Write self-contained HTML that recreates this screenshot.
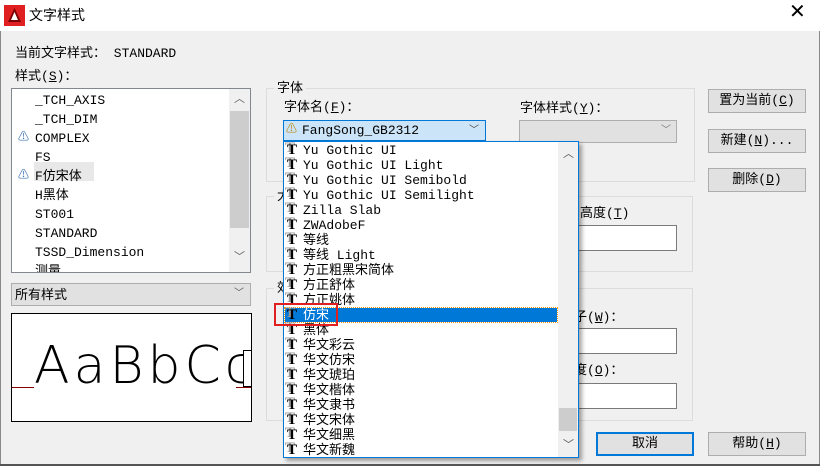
<!DOCTYPE html>
<html><head><meta charset="utf-8"><style>
*{margin:0;padding:0;box-sizing:border-box}
body{width:820px;height:466px;background:#f0f0f0;position:relative;overflow:hidden;font-family:"Liberation Mono","Noto Sans CJK SC",monospace;font-size:13px;color:#000}
.a{position:absolute;white-space:nowrap;line-height:15px}
.box{position:absolute;border:1px solid #a0a0a0;background:#fff}
.grp{position:absolute;border:1px solid #dcdcdc}
.btn{position:absolute;background:#e1e1e1;border:1px solid #adadad;text-align:center;line-height:21px}
.t{display:inline-block;width:16px;font-family:"Liberation Serif",serif;font-weight:bold;font-size:15px;position:relative;text-shadow:-2px -2px 0 #999}
</style></head><body>
<div style="position:absolute;left:0;top:0;width:820px;height:31px;background:#fff"></div>
<svg style="position:absolute;left:4px;top:5px" width="21" height="21"><rect width="21" height="21" fill="#e02020"/><path d="M10.5 3 L17 17 L4 17 Z" fill="#7a0000"/><path d="M10.5 7 L14 15 L7 15Z" fill="#fff"/></svg>
<div class="a" style="left:29px;top:8px;font-family:'Liberation Sans','Noto Sans CJK SC',sans-serif;font-size:14px">文字样式</div>
<div class="a" style="left:789px;top:5px;font-family:'Liberation Sans',sans-serif;font-size:20px;font-weight:300">✕</div>
<div style="position:absolute;left:0;top:31px;width:1px;height:435px;background:#888"></div>
<div style="position:absolute;right:0;top:31px;width:1px;height:435px;background:#888"></div>

<div class="a" style="left:15px;top:46px">当前文字样式：  STANDARD</div>
<div class="a" style="left:15px;top:69px">样式(<u>S</u>)：</div>
<div class="box" style="left:11px;top:88px;width:240px;height:185px;border-color:#828790;overflow:hidden">
<div style="position:absolute;left:217px;top:0;width:21px;height:183px;background:#f0f0f0"></div>
<div style="position:absolute;left:218px;top:22px;width:19px;height:117px;background:#cdcdcd"></div>
<div class="a" style="left:222px;top:4px;font-size:11px;color:#606060">︿</div>
<div class="a" style="left:222px;top:162px;font-size:11px;color:#606060">﹀</div>
<div style="position:absolute;left:22px;top:73px;width:60px;height:19px;background:#e8e8e8"></div>
<div class="a" style="left:23px;top:4px">_TCH_AXIS</div>
<div class="a" style="left:23px;top:23px">_TCH_DIM</div>
<div class="a" style="left:6px;top:42px;color:#3a6fb0;font-size:11px">⚠</div>
<div class="a" style="left:23px;top:42px">COMPLEX</div>
<div class="a" style="left:23px;top:61px">FS</div>
<div class="a" style="left:6px;top:80px;color:#3a6fb0;font-size:11px">⚠</div>
<div class="a" style="left:23px;top:80px">F仿宋体</div>
<div class="a" style="left:23px;top:99px">H黑体</div>
<div class="a" style="left:23px;top:118px">ST001</div>
<div class="a" style="left:23px;top:137px">STANDARD</div>
<div class="a" style="left:23px;top:156px">TSSD_Dimension</div>
<div class="a" style="left:23px;top:175px">测量</div>
</div>
<div style="position:absolute;left:11px;top:283px;width:240px;height:23px;background:#e1e1e1;border:1px solid #adadad"></div>
<div class="a" style="left:15px;top:287px;font-family:'Liberation Sans','Noto Sans CJK SC',sans-serif">所有样式</div>
<div class="a" style="left:234px;top:287px;font-size:10px;color:#555">﹀</div>
<div style="position:absolute;left:11px;top:313px;width:241px;height:109px;background:#fff;border:1px solid #000;overflow:hidden">
<div style="position:absolute;left:0;top:73px;width:22px;height:1px;background:#800"></div>
<div style="position:absolute;left:224px;top:73px;width:20px;height:1px;background:#800"></div>
<div class="a" style="left:22px;top:24px;font-family:'DejaVu Sans',sans-serif;font-size:52px;line-height:56px;font-weight:200;letter-spacing:4px">AaBbCc</div>
<div style="position:absolute;left:231px;top:36px;width:14px;height:37px;border:1px solid #000;background:#fff"></div>
</div>

<div class="grp" style="left:266px;top:88px;width:429px;height:94px"></div>
<div class="a" style="left:274px;top:81px;background:#f0f0f0;padding:0 3px">字体</div>
<div class="a" style="left:284px;top:100px">字体名(<u>F</u>)：</div>
<div style="position:absolute;left:283px;top:120px;width:203px;height:21px;background:#cce4f7;border:1px solid #0078d7"></div>
<div class="a" style="left:286px;top:123px;color:#b8860b;font-size:11px">⚠</div>
<div class="a" style="left:302px;top:123px">FangSong_GB2312</div>
<div class="a" style="left:469px;top:124px;font-size:10px;color:#444">﹀</div>
<div class="a" style="left:520px;top:101px">字体样式(<u>Y</u>)：</div>
<div style="position:absolute;left:519px;top:120px;width:158px;height:23px;background:#e1e1e1;border:1px solid #adadad"></div>
<div class="a" style="left:661px;top:124px;font-size:10px;color:#777">﹀</div>

<div class="grp" style="left:266px;top:196px;width:427px;height:76px"></div>
<div class="a" style="left:274px;top:189px;background:#f0f0f0;padding:0 3px">大</div>
<div class="a" style="left:580px;top:206px">高度(<u>T</u>)</div>
<div class="box" style="left:578px;top:225px;width:99px;height:26px;border-color:#7a7a7a"></div>
<div class="grp" style="left:266px;top:288px;width:427px;height:133px"></div>
<div class="a" style="left:274px;top:281px;background:#f0f0f0;padding:0 3px">效</div>
<div class="a" style="left:535px;top:310px">宽度因子(<u>W</u>)：</div>
<div class="box" style="left:578px;top:328px;width:99px;height:26px;border-color:#7a7a7a"></div>
<div class="a" style="left:535px;top:363px">倾斜角度(<u>O</u>)：</div>
<div class="box" style="left:578px;top:383px;width:99px;height:26px;border-color:#7a7a7a"></div>

<div class="btn" style="left:708px;top:89px;width:98px;height:24px">置为当前(<u>C</u>)</div>
<div class="btn" style="left:708px;top:129px;width:98px;height:24px">新建(<u>N</u>)...</div>
<div class="btn" style="left:708px;top:168px;width:98px;height:24px">删除(<u>D</u>)</div>
<div class="btn" style="left:596px;top:432px;width:98px;height:24px;border:2px solid #0078d7;line-height:19px">取消</div>
<div class="btn" style="left:708px;top:432px;width:98px;height:24px">帮助(<u>H</u>)</div>

<div style="position:absolute;left:283px;top:141px;width:296px;height:317px;background:#fff;border:1px solid #0078d7;box-shadow:3px 3px 4px rgba(0,0,0,.35);overflow:hidden">
<div style="position:absolute;left:274px;top:0;width:20px;height:315px;background:#f0f0f0"></div>
<div style="position:absolute;left:275px;top:266px;width:18px;height:23px;background:#cdcdcd"></div>
<div class="a" style="left:279px;top:6px;font-size:11px;color:#555">︿</div>
<div class="a" style="left:279px;top:297px;font-size:11px;color:#555">﹀</div>
<div style="position:absolute;left:1px;top:166px;width:272px;height:14px;background:#0078d7;outline:1px dotted #f90"></div>
<div style="position:absolute;left:0;top:1px">
<div class="a" style="left:3px;top:0"><span class="t">T</span>Yu Gothic UI</div>
<div class="a" style="left:3px;top:15px"><span class="t">T</span>Yu Gothic UI Light</div>
<div class="a" style="left:3px;top:30px"><span class="t">T</span>Yu Gothic UI Semibold</div>
<div class="a" style="left:3px;top:45px"><span class="t">T</span>Yu Gothic UI Semilight</div>
<div class="a" style="left:3px;top:60px"><span class="t">T</span>Zilla Slab</div>
<div class="a" style="left:3px;top:75px"><span class="t">T</span>ZWAdobeF</div>
<div class="a" style="left:3px;top:90px"><span class="t">T</span>等线</div>
<div class="a" style="left:3px;top:105px"><span class="t">T</span>等线 Light</div>
<div class="a" style="left:3px;top:120px"><span class="t">T</span>方正粗黑宋简体</div>
<div class="a" style="left:3px;top:135px"><span class="t">T</span>方正舒体</div>
<div class="a" style="left:3px;top:150px"><span class="t">T</span>方正姚体</div>
<div class="a" style="left:3px;top:165px;color:#fff"><span class="t" style="color:#000">T</span>仿宋</div>
<div class="a" style="left:3px;top:180px"><span class="t">T</span>黑体</div>
<div class="a" style="left:3px;top:195px"><span class="t">T</span>华文彩云</div>
<div class="a" style="left:3px;top:210px"><span class="t">T</span>华文仿宋</div>
<div class="a" style="left:3px;top:225px"><span class="t">T</span>华文琥珀</div>
<div class="a" style="left:3px;top:240px"><span class="t">T</span>华文楷体</div>
<div class="a" style="left:3px;top:255px"><span class="t">T</span>华文隶书</div>
<div class="a" style="left:3px;top:270px"><span class="t">T</span>华文宋体</div>
<div class="a" style="left:3px;top:285px"><span class="t">T</span>华文细黑</div>
<div class="a" style="left:3px;top:300px"><span class="t">T</span>华文新魏</div>
</div>
</div>
<div style="position:absolute;left:274px;top:303px;width:64px;height:23px;border:2px solid #e02020"></div>
<div style="position:absolute;left:0;top:464px;width:820px;height:2px;background:#555"></div>
</body></html>
